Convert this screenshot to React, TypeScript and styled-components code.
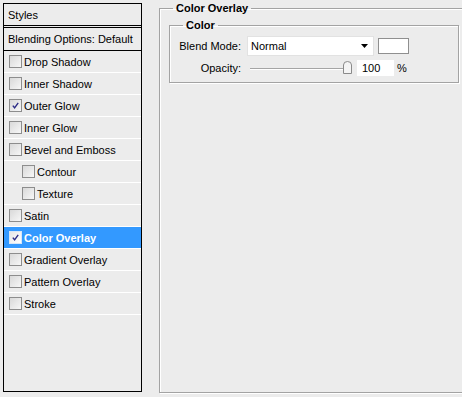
import React from 'react';
import styled, { createGlobalStyle } from 'styled-components';

const GlobalStyle = createGlobalStyle`
  html, body { margin: 0; padding: 0; background: #ececec; }
  body {
    font-family: "Liberation Sans", Arial, sans-serif;
    font-size: 11px;
    color: #000;
  }
`;

const Page = styled.div`
  display: flex;
  align-items: flex-start;
  width: 462px;
  height: 397px;
  overflow: hidden;
  box-sizing: border-box;
  padding-left: 3px;
`;

const StylesPanel = styled.div`
  margin-top: 3px;
  width: 139px;
  height: 389px;
  flex: none;
  box-sizing: border-box;
  border: 1px solid #000;
  display: flex;
  flex-direction: column;
  background: #ececec;
`;

const PanelHeader = styled.div`
  height: 21px;
  display: flex;
  align-items: center;
  padding-left: 4px;
  border-bottom: 3px double #000;
`;

const BlendingRow = styled.div`
  height: 22px;
  display: flex;
  align-items: center;
  padding-left: 4px;
  border-bottom: 1px solid #000;
`;

const StyleRow = styled.div<{ $indent?: boolean; $selected?: boolean }>`
  height: 21px;
  flex: none;
  display: flex;
  align-items: center;
  gap: 2px;
  padding-left: ${p => (p.$indent ? 18 : 5)}px;
  border-bottom: 1px solid #fff;
  background: ${p => (p.$selected ? '#3399ff' : 'transparent')};
  color: ${p => (p.$selected ? '#fff' : '#000')};
  font-weight: ${p => (p.$selected ? 'bold' : 'normal')};
`;

const Box = styled.span<{ $selected?: boolean }>`
  width: 13px;
  height: 13px;
  box-sizing: border-box;
  flex: none;
  border: 1px solid ${p => (p.$selected ? '#d6e6f7' : '#8d8d8d')};
  background: ${p =>
    p.$selected
      ? 'linear-gradient(135deg, #e6e6e6, #ffffff)'
      : 'linear-gradient(135deg, #d9d9d9, #f7f7f7)'};
  display: flex;
  align-items: center;
  justify-content: center;
`;

const Checkbox = ({ checked, selected }: { checked?: boolean; selected?: boolean }) => (
  <Box $selected={selected}>
    {checked && (
      <svg width="9" height="9" viewBox="0 0 9 9">
        <path d="M1.8 4.6 L3.6 6.8 L7.2 1.8" fill="none" stroke="#2b2b86" strokeWidth="1.4" />
      </svg>
    )}
  </Box>
);

const GroupBox = styled.fieldset`
  margin: 0;
  min-width: 0;
  box-sizing: border-box;
  border: 1px solid #a3a3a3;
  box-shadow: inset 1px 1px 0 #fff, 1px 1px 0 #fff;
`;

const OuterGroup = styled(GroupBox)`
  margin: 2px 0 0 17px;
  flex: none;
  width: 320px;
  height: 391px;
  padding: 4px 0 0 9px;
`;

const InnerGroup = styled(GroupBox)`
  width: 290px;
  padding: 4px 0 6px 0;
  display: flex;
  flex-direction: column;
  gap: 4px;
`;

const Legend = styled.legend<{ $offset: number }>`
  margin-left: ${p => p.$offset}px;
  padding: 0 3px;
  font-weight: bold;
  line-height: 13px;
`;

const FieldRow = styled.div`
  display: flex;
  align-items: center;
`;

const Label = styled.span`
  width: 71px;
  text-align: right;
  margin-right: 6px;
  flex: none;
`;

const Select = styled.div`
  width: 127px;
  height: 20px;
  box-sizing: border-box;
  background: #fff;
  border: 1px solid #e2e2e2;
  display: flex;
  align-items: center;
  justify-content: space-between;
  padding: 0 4px 0 3px;
`;

const Swatch = styled.div`
  width: 31px;
  height: 16px;
  margin-left: 4px;
  box-sizing: border-box;
  border: 1px solid #8f8f8f;
  background: #fff;
`;

const Slider = styled.div`
  position: relative;
  width: 102px;
  height: 16px;
  margin-left: 3px;
  display: flex;
  align-items: center;
`;

const Track = styled.div`
  width: 100%;
  height: 1px;
  background: #a5a5a5;
  box-shadow: 0 1px 0 #fff;
`;

const Thumb = styled.svg`
  position: absolute;
  right: 0;
  top: 1px;
`;

const NumberInput = styled.div`
  width: 37px;
  height: 16px;
  margin-left: 5px;
  box-sizing: border-box;
  background: #fff;
  display: flex;
  align-items: center;
  padding-left: 5px;
`;

const Unit = styled.span`
  margin-left: 3px;
`;

const styleItems: { name: string; checked?: boolean; indent?: boolean; selected?: boolean }[] = [
  { name: 'Drop Shadow' },
  { name: 'Inner Shadow' },
  { name: 'Outer Glow', checked: true },
  { name: 'Inner Glow' },
  { name: 'Bevel and Emboss' },
  { name: 'Contour', indent: true },
  { name: 'Texture', indent: true },
  { name: 'Satin' },
  { name: 'Color Overlay', checked: true, selected: true },
  { name: 'Gradient Overlay' },
  { name: 'Pattern Overlay' },
  { name: 'Stroke' },
];

export default function App() {
  return (
    <>
      <GlobalStyle />
      <Page>
        <StylesPanel>
          <PanelHeader>Styles</PanelHeader>
          <BlendingRow>Blending Options: Default</BlendingRow>
          {styleItems.map(item => (
            <StyleRow key={item.name} $indent={item.indent} $selected={item.selected}>
              <Checkbox checked={item.checked} selected={item.selected} />
              {item.name}
            </StyleRow>
          ))}
        </StylesPanel>
        <OuterGroup>
          <Legend $offset={4}>Color Overlay</Legend>
          <InnerGroup>
            <Legend $offset={13}>Color</Legend>
            <FieldRow>
              <Label>Blend Mode:</Label>
              <Select>
                <span>Normal</span>
                <svg width="8" height="5" viewBox="0 0 8 5">
                  <path d="M0 0 H7 L3.5 4 Z" fill="#000" />
                </svg>
              </Select>
              <Swatch />
            </FieldRow>
            <FieldRow>
              <Label>Opacity:</Label>
              <Slider>
                <Track />
                <Thumb width="9" height="13" viewBox="0 0 9 13">
                  <path
                    d="M0.5 12.5 V4 Q0.5 0.5 4.5 0.5 Q8.5 0.5 8.5 4 V12.5 Z"
                    fill="#f4f4f4"
                    stroke="#8a8a8a"
                  />
                </Thumb>
              </Slider>
              <NumberInput>100</NumberInput>
              <Unit>%</Unit>
            </FieldRow>
          </InnerGroup>
        </OuterGroup>
      </Page>
    </>
  );
}
